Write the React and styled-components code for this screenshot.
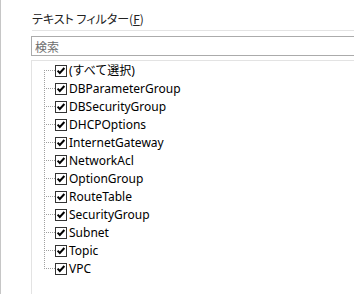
import React from 'react'
import styled, { createGlobalStyle } from 'styled-components'

const GlobalStyle = createGlobalStyle`
  html, body {
    margin: 0;
    padding: 0;
    background: #fff;
  }
  body {
    font-family: 'Noto Sans', 'Noto Sans CJK JP', sans-serif;
    font-size: 12px;
  }
`

const items = [
  '(すべて選択)',
  'DBParameterGroup',
  'DBSecurityGroup',
  'DHCPOptions',
  'InternetGateway',
  'NetworkAcl',
  'OptionGroup',
  'RouteTable',
  'SecurityGroup',
  'Subnet',
  'Topic',
  'VPC',
]

function CheckBox() {
  return (
    <svg width='12' height='12' viewBox='0 0 12 12'>
      <rect x='0.5' y='0.5' width='11' height='11' fill='#fff' stroke='#333' />
      <path d='M2.6 5.6 L4.8 8 L9.4 3' fill='none' stroke='#000' strokeWidth='2' />
    </svg>
  )
}

function App() {
  return (
    <>
      <GlobalStyle />
      <Page>
        <Panel>
          <Label>
            テキスト フィルター(<u>F</u>)
          </Label>
          <Separator />
          <SearchBox placeholder='検索' />
          <ListBox>
            {items.map((item, i) => (
              <Row key={item}>
                <Connector $first={i === 0} $last={i === items.length - 1} />
                <CheckBox />
                <ItemText>{item}</ItemText>
              </Row>
            ))}
          </ListBox>
        </Panel>
      </Page>
    </>
  )
}

export default App

///// Style //////

const Page = styled.div`
  width: 354px;
  height: 294px;
  box-sizing: border-box;
  border-left: 1px solid #c6c6c6;
  overflow: hidden;
`

const Panel = styled.div`
  display: flex;
  flex-direction: column;
  height: 100%;
  margin-left: 30px;
`

const Label = styled.div`
  height: 30px;
  box-sizing: border-box;
  padding: 10px 0 0 1px;
  line-height: 18px;
  color: #222;
  font-family: 'Noto Sans CJK JP', sans-serif;
  font-feature-settings: 'palt';
  font-size: 12px;

  & u {
    text-underline-offset: 1px;
  }
`

const Separator = styled.div`
  height: 1px;
  margin-left: 1px;
  background: #e3e3e3;
  margin-bottom: 5px;
`

const SearchBox = styled.input`
  height: 20px;
  box-sizing: border-box;
  margin: 0;
  padding: 0 3px;
  border: 1px solid #ababab;
  border-right: none;
  outline: none;
  font-family: 'Noto Sans CJK JP', sans-serif;
  font-size: 12px;
  color: #000;

  &::placeholder {
    color: #6d6d6d;
  }
`

const ListBox = styled.div`
  flex: 1;
  margin-top: 4px;
  border-top: 1px solid #e3e3e3;
  border-left: 1px solid #e3e3e3;
  padding-top: 1px;
`

const Row = styled.div`
  display: flex;
  align-items: center;
  height: 18px;
`

const Connector = styled.span`
  position: relative;
  width: 23px;
  height: 18px;
  flex-shrink: 0;

  &::before {
    content: '';
    position: absolute;
    left: 12px;
    width: 1px;
    top: ${(p) => (p.$first ? '8px' : '0')};
    height: ${(p) => (p.$last ? '9px' : p.$first ? '10px' : '18px')};
    background-image: repeating-linear-gradient(
      to bottom,
      #a0a0a0 0 1px,
      transparent 1px 2px
    );
  }

  &::after {
    content: '';
    position: absolute;
    left: 13px;
    top: 8px;
    width: 10px;
    height: 1px;
    background-image: repeating-linear-gradient(
      to right,
      transparent 0 1px,
      #a0a0a0 1px 2px
    );
  }
`

const ItemText = styled.span`
  margin-left: 2px;
  color: #000;
  white-space: nowrap;
  line-height: 18px;
`
